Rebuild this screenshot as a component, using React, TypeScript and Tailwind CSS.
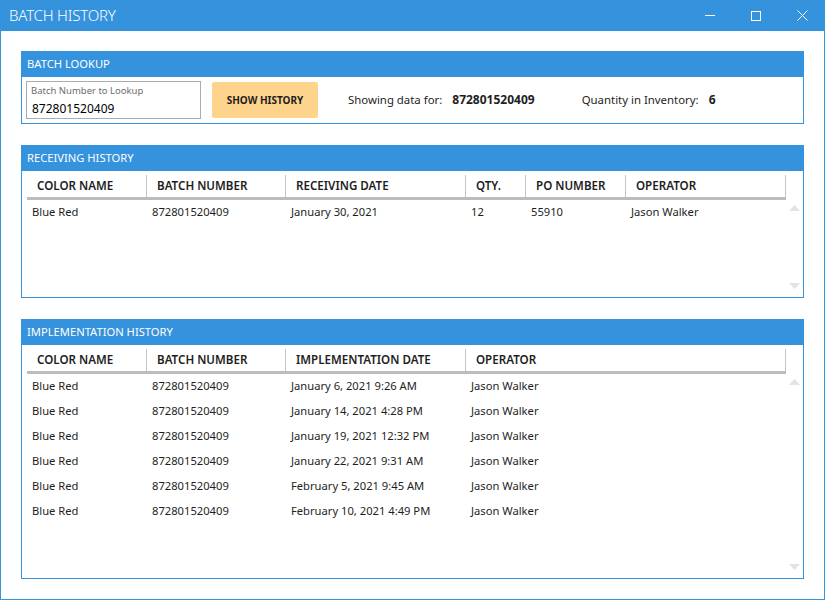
import React from 'react';

type Column = { label: string; width: string; key: string };

const receivingColumns: Column[] = [
  { label: 'COLOR NAME', width: 'w-[120px]', key: 'color' },
  { label: 'BATCH NUMBER', width: 'w-[139px]', key: 'batch' },
  { label: 'RECEIVING DATE', width: 'w-[180px]', key: 'date' },
  { label: 'QTY.', width: 'w-[60px]', key: 'qty' },
  { label: 'PO NUMBER', width: 'w-[100px]', key: 'po' },
  { label: 'OPERATOR', width: 'w-[160px]', key: 'operator' },
];

const implementationColumns: Column[] = [
  { label: 'COLOR NAME', width: 'w-[120px]', key: 'color' },
  { label: 'BATCH NUMBER', width: 'w-[139px]', key: 'batch' },
  { label: 'IMPLEMENTATION DATE', width: 'w-[180px]', key: 'date' },
  { label: 'OPERATOR', width: 'w-[320px]', key: 'operator' },
];

const receivingRows: Record<string, string>[] = [
  {
    color: 'Blue Red',
    batch: '872801520409',
    date: 'January 30, 2021',
    qty: '12',
    po: '55910',
    operator: 'Jason Walker',
  },
];

const implementationRows: Record<string, string>[] = [
  'January 6, 2021 9:26 AM',
  'January 14, 2021 4:28 PM',
  'January 19, 2021 12:32 PM',
  'January 22, 2021 9:31 AM',
  'February 5, 2021 9:45 AM',
  'February 10, 2021 4:49 PM',
].map((date) => ({
  color: 'Blue Red',
  batch: '872801520409',
  date,
  operator: 'Jason Walker',
}));

function Panel({
  title,
  className,
  children,
}: {
  title: string;
  className?: string;
  children: React.ReactNode;
}) {
  return (
    <div className={`flex flex-col border border-[#3592dd] ${className || ''}`}>
      <div className="flex h-[25px] shrink-0 items-center bg-[#3592dd] px-[5px] text-[11.2px] text-white">
        {title}
      </div>
      {children}
    </div>
  );
}

function Arrow({ up }: { up?: boolean }) {
  return (
    <svg width="11" height="6" viewBox="0 0 11 6">
      <path d={up ? 'M0 6 L5.5 0 L11 6 Z' : 'M0 0 L5.5 6 L11 0 Z'} fill="#e3e3e3" />
    </svg>
  );
}

function HistoryTable({
  columns,
  rows,
}: {
  columns: Column[];
  rows: Record<string, string>[];
}) {
  return (
    <div className="flex flex-1 pl-[5px] pt-[4px]">
      <div className="w-[759px]">
        <div className="flex border-b-[3px] border-[#bcbcbc]">
          {columns.map((col) => (
            <div
              key={col.key}
              className={`${col.width} flex h-[22px] items-center border-r border-[#c4c4c4] pl-[10px] text-[11.6px] font-semibold text-[#1e1e1e]`}
            >
              {col.label}
            </div>
          ))}
        </div>
        {rows.map((row, i) => (
          <div key={i} className="flex h-[25px] items-center pb-px">
            {columns.map((col) => (
              <div key={col.key} className={`${col.width} pl-[5px] text-[11.2px] text-[#1e1e1e]`}>
                {row[col.key]}
              </div>
            ))}
          </div>
        ))}
      </div>
      <div className="flex w-[17px] flex-col items-center justify-between pb-[8px] pt-[30px]">
        <Arrow up />
        <Arrow />
      </div>
    </div>
  );
}

export default function App() {
  return (
    <div
      className="flex h-[600px] w-[825px] flex-col border-x border-b border-[#3592dd] bg-white"
      style={{ fontFamily: '"Segoe UI", "Noto Sans", "Open Sans", sans-serif' }}
    >
      {/* title bar */}
      <div className="-mx-px flex h-[31px] shrink-0 items-center bg-[#3592dd] text-white">
        <div className="pl-[9px] text-[15px] font-light tracking-[-0.2px]">BATCH HISTORY</div>
        <div className="ml-auto flex h-full items-center">
          <div className="flex h-full w-[46px] items-center justify-center">
            <div className="h-px w-[10px] bg-white" />
          </div>
          <div className="flex h-full w-[46px] items-center justify-center">
            <div className="h-[10px] w-[10px] border border-white" />
          </div>
          <div className="flex h-full w-[46px] items-center justify-center">
            <svg width="11" height="11" viewBox="0 0 11 11">
              <path d="M0.5 0.5 L10.5 10.5 M10.5 0.5 L0.5 10.5" stroke="white" strokeWidth="1" />
            </svg>
          </div>
        </div>
      </div>

      {/* content */}
      <div className="flex flex-1 flex-col gap-[21px] px-[20px] pb-[20px] pt-[20px]">
        <Panel title="BATCH LOOKUP" className="h-[73px]">
          <div className="flex flex-1 items-start pl-[4px] pt-[4px]">
            <div className="flex h-[38px] w-[175px] flex-col border border-[#acacac] px-[4px] pt-[2px]">
              <span className="text-[9.5px] leading-[14px] text-[#6d6d6d]">Batch Number to Lookup</span>
              <span className="pl-px pt-[2px] text-[12px] leading-[18px] text-black">872801520409</span>
            </div>
            <button
              type="button"
              className="ml-[11px] mt-px flex h-[36px] w-[106px] items-center justify-center rounded-[2px] bg-[#fed48c] text-[10px] font-bold text-[#1e1e1e]"
            >
              SHOW HISTORY
            </button>
            <div className="ml-[30px] flex h-[38px] items-center text-[11.4px] text-[#1e1e1e]">
              <span>Showing data for:</span>
              <span className="ml-[10px] text-[12px] font-bold">872801520409</span>
              <span className="ml-[47px]">Quantity in Inventory:</span>
              <span className="ml-[10px] text-[12px] font-bold">6</span>
            </div>
          </div>
        </Panel>

        <Panel title="RECEIVING HISTORY" className="h-[153px]">
          <HistoryTable columns={receivingColumns} rows={receivingRows} />
        </Panel>

        <Panel title="IMPLEMENTATION HISTORY" className="flex-1">
          <HistoryTable columns={implementationColumns} rows={implementationRows} />
        </Panel>
      </div>
    </div>
  );
}
